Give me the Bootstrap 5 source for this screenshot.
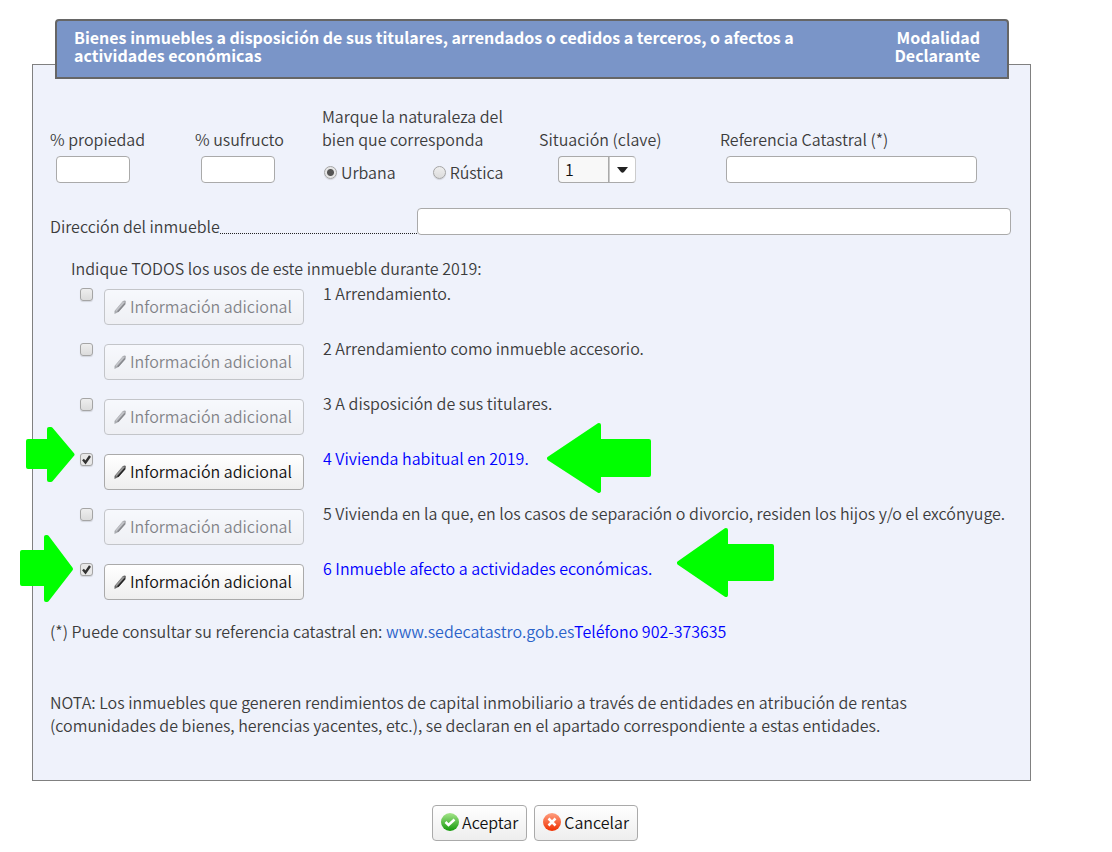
<!DOCTYPE html>
<html lang="es">
<head>
<meta charset="utf-8">
<meta name="viewport" content="width=device-width, initial-scale=1">
<title>Bienes inmuebles</title>
<link href="https://cdn.jsdelivr.net/npm/bootstrap@5.3.0/dist/css/bootstrap.min.css" rel="stylesheet">
<style>
  body { font-family: "Noto Sans CJK SC", "Open Sans", sans-serif; font-weight: 350; font-size: 16px; line-height: 23px; color: #3c3c3c; background: #fff; }
  .page { margin: 19px 81px 0 32px; }
  .title-bar { position: relative; z-index: 1; margin: 0 22px -15px 23px; padding: 7px 27px 11px 17px; min-height: 60px; background: #7a95c8; border: 2px solid #666; border-radius: 4px 4px 0 0; color: #fff; font-size: 16px; line-height: 18px; font-weight: 700; }
  .title-bar h1 { font: inherit; max-width: 740px; }
  .mode { width: 90px; }
  .panel { background: #eff2fb; border: 1px solid #808080; padding: 40px 19px 43px 17px; }
  .data-grid { display: grid; grid-template-columns: 145px 127px 217px 181px 1fr; align-items: end; }
  .field { display: block; height: 27px; border: 1px solid #aaa; border-radius: 4px; background: #fff; padding: 0 8px; font-weight: 350; }
  .data-grid .field { margin: 5px 0 0 6px; }
  .field-pct { width: 74px; }
  .field-ref { width: 251px; }
  .data-grid .field-key { width: 78px; margin-left: 19px; appearance: none; color: #111; border-right-color: #ccc; padding: 0 6px;
    background: url("data:image/svg+xml,%3Csvg xmlns='http://www.w3.org/2000/svg' width='11' height='6'%3E%3Cpath d='M0 0h11L7 5q-1.500 1.500-3 0z' fill='%23222'/%3E%3C/svg%3E") right 7px center no-repeat,
      linear-gradient(90deg, #f8f8f8 49px, #aaa 49px, #aaa 50px, #ccc 50px, #ccc 51px, #fff 51px); }
  .tick { appearance: none; flex: none; width: 13px; height: 13px; margin: 0; border: 1px solid #a5a5a5; background: linear-gradient(#eee, #dcdcdc); box-shadow: 0 1px 1px rgba(0,0,0,.12); }
  .tick[type=radio] { border-radius: 50%; }
  .tick[type=checkbox] { border-radius: 3px; }
  .tick[type=radio]:checked { background: radial-gradient(circle, #555 3px, #e6e6e6 4px); }
  .tick[type=checkbox]:checked { background: url("data:image/svg+xml,%3Csvg xmlns='http://www.w3.org/2000/svg' width='11' height='11'%3E%3Cpath d='M2 5.500l2.500 3L9 2' fill='none' stroke='%23333' stroke-width='2.400'/%3E%3C/svg%3E") center no-repeat, #e8e8e8; }
  .radio-label { display: flex; align-items: center; gap: 4px; line-height: 21px; }
  .radios { gap: 37px; padding-left: 2px; margin-top: 11px; }
  .dots { border-bottom: 1px dotted #222; margin-bottom: 1px; }
  .dir-row { margin-top: 25px; }
  .dir-label { width: 367px; height: 27px; }
  .dir-label label { line-height: 37px; height: 27px; }
  .uses-title { margin: 22px 0 2px 21px; }
  .use { position: relative; height: 55px; padding-left: 30px; }
  .use .tick { margin-top: 6px; }
  .btn-tool { display: inline-flex; align-items: center; gap: 3px; height: 36px; padding: 0 8px 2px; border: 1px solid #aaa; border-radius: 4px; background: linear-gradient(#fff, #eee); color: #111; font-size: 16px; line-height: 23px; font-weight: 350; white-space: nowrap; }
  .btn-tool:disabled { background: linear-gradient(#fff, #eee); color: #111; border-color: #999; opacity: .5; }
  .btn-info { width: 200px; margin: 7px 19px 0 11px; }
  .chosen { color: #00f; }
  .site { color: #2a62c9; text-decoration: none; }
  .arrow { position: absolute; fill: #0f0; stroke: #0f0; stroke-width: 4; stroke-linejoin: round; }
  .arrow-in4 { left: -24px; top: -20px; }
  .arrow-in6 { left: -30px; top: -22px; }
  .arrow-out4 { left: 497px; top: -24px; }
  .arrow-out6 { left: 627px; top: -29px; }
  .actions { gap: 7px; padding: 24px 0 11px 7px; }
</style>
</head>
<body>
<svg class="d-none" aria-hidden="true">
  <defs>
    <symbol id="pencil" viewBox="0 0 14 16"><path d="M9.500 3.500Q12 1.500 13 3.500L12.500 6 5.500 14 1.500 16 1.500 13Z" fill="#666"/><path d="M10 3.500 2.500 12.500 3.500 13.500 11.500 4.500Z" fill="#999"/><path d="M12.500 6 5.500 14 4 13.500 11.500 5Z" fill="#222"/></symbol>
  </defs>
</svg>
<main class="page">
  <header class="title-bar d-flex justify-content-between">
    <h1 class="m-0">Bienes inmuebles a disposición de sus titulares, arrendados o cedidos a terceros, o afectos a actividades económicas</h1>
    <div class="mode text-end">Modalidad Declarante</div>
  </header>
  <form id="inmueble" class="panel">
    <div class="data-grid">
      <div><label for="prop">% propiedad</label><input id="prop" type="text" class="field field-pct"></div>
      <div><label for="usu">% usufructo</label><input id="usu" type="text" class="field field-pct"></div>
      <div role="radiogroup" aria-labelledby="nat">
        <div id="nat">Marque la naturaleza del<br>bien que corresponda</div>
        <div class="d-flex radios">
          <label class="radio-label"><input class="tick" type="radio" name="nat" checked>Urbana</label>
          <label class="radio-label"><input class="tick" type="radio" name="nat">Rústica</label>
        </div>
      </div>
      <div><label for="clave">Situación (clave)</label><select id="clave" class="field field-key"><option>1</option><option>2</option><option>3</option></select></div>
      <div><label for="ref">Referencia Catastral (*)</label><input id="ref" type="text" class="field field-ref"></div>
    </div>
    <div class="dir-row d-flex align-items-end">
      <div class="dir-label d-flex align-items-end"><label for="dir">Dirección del inmueble</label><span class="dots flex-grow-1"></span></div>
      <input id="dir" type="text" class="field flex-grow-1">
    </div>
    <div class="uses-title">Indique TODOS los usos de este inmueble durante 2019:</div>
    <div class="uses">
      <div class="use d-flex align-items-start"><input class="tick" type="checkbox" id="u1"><button type="button" class="btn-tool btn-info" disabled><svg width="14" height="16"><use href="#pencil"/></svg>Información adicional</button><label for="u1">1 Arrendamiento.</label></div>
      <div class="use d-flex align-items-start"><input class="tick" type="checkbox" id="u2"><button type="button" class="btn-tool btn-info" disabled><svg width="14" height="16"><use href="#pencil"/></svg>Información adicional</button><label for="u2">2 Arrendamiento como inmueble accesorio.</label></div>
      <div class="use d-flex align-items-start"><input class="tick" type="checkbox" id="u3"><button type="button" class="btn-tool btn-info" disabled><svg width="14" height="16"><use href="#pencil"/></svg>Información adicional</button><label for="u3">3 A disposición de sus titulares.</label></div>
      <div class="use d-flex align-items-start"><input class="tick" type="checkbox" id="u4" checked><button type="button" class="btn-tool btn-info"><svg width="14" height="16"><use href="#pencil"/></svg>Información adicional</button><label for="u4" class="chosen">4 Vivienda habitual en 2019.</label>
        <svg class="arrow arrow-in4" width="49" height="56"><path d="M2 14H23V2H25L46.500 27.500 25 53H23V40H2Z"/></svg>
        <svg class="arrow arrow-out4" width="104" height="71"><path d="M102 18H52V2L2 35.500 52 68V52H102Z"/></svg>
      </div>
      <div class="use d-flex align-items-start"><input class="tick" type="checkbox" id="u5"><button type="button" class="btn-tool btn-info" disabled><svg width="14" height="16"><use href="#pencil"/></svg>Información adicional</button><label for="u5">5 Vivienda en la que, en los casos de separación o divorcio, residen los hijos y/o el excónyuge.</label></div>
      <div class="use d-flex align-items-start"><input class="tick" type="checkbox" id="u6" checked><button type="button" class="btn-tool btn-info"><svg width="14" height="16"><use href="#pencil"/></svg>Información adicional</button><label for="u6" class="chosen">6 Inmueble afecto a actividades económicas.</label>
        <svg class="arrow arrow-in6" width="54" height="68"><path d="M2 17H26V2H27L51 34 27 65H26V49H2Z"/></svg>
        <svg class="arrow arrow-out6" width="98" height="70"><path d="M95 18H49V2L2 35 49 67V51H95Z"/></svg>
      </div>
    </div>
    <p class="mt-2 mb-5">(*) Puede consultar su referencia catastral en: <a class="site" href="#">www.sedecatastro.gob.es</a><span class="chosen">Teléfono 902-373635</span></p>
    <p class="m-0">NOTA: Los inmuebles que generen rendimientos de capital inmobiliario a través de entidades en atribución de rentas<br>(comunidades de bienes, herencias yacentes, etc.), se declaran en el apartado correspondiente a estas entidades.</p>
  </form>
  <div class="actions d-flex justify-content-center">
    <button type="submit" form="inmueble" class="btn-tool"><svg width="18" height="18"><defs><linearGradient id="ok" x2="0" y2="1"><stop stop-color="#a5e58a"/><stop offset="1" stop-color="#14990b"/></linearGradient></defs><circle cx="9" cy="9" r="9" fill="url(#ok)"/><path d="M4.500 9l3 3 6-5.500" fill="none" stroke="#fff" stroke-width="2.500"/></svg>Aceptar</button>
    <button type="button" class="btn-tool"><svg width="18" height="18"><defs><linearGradient id="no" x2="0" y2="1"><stop stop-color="#ff9f80"/><stop offset="1" stop-color="#f03000"/></linearGradient></defs><circle cx="9" cy="9" r="9" fill="url(#no)"/><path d="M5.500 5.500l7 7m0-7l-7 7" stroke="#fff" stroke-width="2.500"/></svg>Cancelar</button>
  </div>
</main>
<script src="https://cdn.jsdelivr.net/npm/bootstrap@5.3.0/dist/js/bootstrap.bundle.min.js"></script>
</body>
</html>
